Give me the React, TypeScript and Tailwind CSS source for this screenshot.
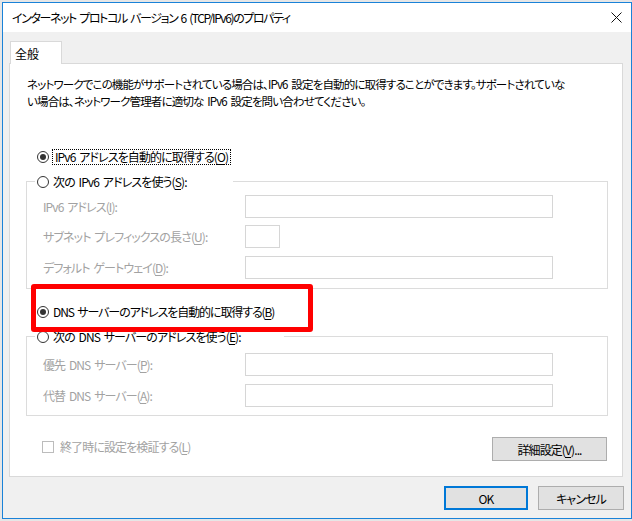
import React from 'react';

function Radio({ checked }: { checked?: boolean }) {
    return (
        <span className="flex h-[12px] w-[12px] shrink-0 items-center justify-center rounded-full border border-[#333333] bg-white">
            {checked && <span className="h-[6px] w-[6px] rounded-full bg-[#333333]" />}
        </span>
    );
}

function Key({ k }: { k: string }) {
    return <span className="underline decoration-1 underline-offset-[2px]">{k}</span>;
}

function Field({ label, k, narrow, last }: { label: string; k: string; narrow?: boolean; last?: boolean }) {
    return (
        <div className={last ? 'mt-[8px] flex h-[23px] items-center' : 'flex h-[23px] items-center'}>
            <span className="w-[210px] shrink-0 whitespace-nowrap pl-[8px] text-[#a2a2a2]">
                {label}(<Key k={k} />):
            </span>
            <span className={narrow ? 'h-[23px] w-[35px] border border-[#d6d6d6] bg-white' : 'h-[23px] w-[308px] border border-[#d6d6d6] bg-white'} />
        </div>
    );
}

export default function App() {
    return (
        <div className="h-[521px] w-[632px] bg-[#e6e6e6] pl-[2px] pt-[2px] font-['Noto_Sans_CJK_JP',sans-serif] text-[12px] leading-[17px] tracking-[-0.9px] text-black [font-feature-settings:'palt'] [word-spacing:2px]">
            <div className="flex h-[517px] w-[630px] flex-col border border-[#1a82d8] bg-[#f0f0f0]">
                {/* Title bar */}
                <div className="flex h-[29px] shrink-0 items-center justify-between bg-white px-[9px]">
                    <span className="whitespace-nowrap tracking-[-1.4px]">インターネット プロトコル バージョン 6 (TCP/IPv6)のプロパティ</span>
                    <svg width="11" height="11" viewBox="0 0 11 11">
                        <path d="M0.5 0.5 L10.5 10.5 M10.5 0.5 L0.5 10.5" stroke="#111" strokeWidth="1" />
                    </svg>
                </div>

                {/* Body */}
                <div className="flex flex-1 flex-col pl-[6px]">
                    <div className="relative z-10 -mb-px ml-px mt-[9px] flex h-[23px] w-[52px] items-center border border-b-0 border-[#d9d9d9] bg-white pl-[4px] tracking-normal">
                        全般
                    </div>

                    <div className="relative flex h-[414px] w-[614px] flex-col border border-[#d9d9d9] bg-white">
                        <p className="pl-[17px] pt-[12px] text-[11.5px] tracking-[-0.85px]">
                            <span className="block whitespace-nowrap">
                                ネットワークでこの機能がサポートされている場合は、IPv6 設定を自動的に取得することができます。サポートされていな
                            </span>
                            <span className="block whitespace-nowrap">い場合は、ネットワーク管理者に適切な IPv6 設定を問い合わせてください。</span>
                        </p>

                        {/* IPv6 auto */}
                        <div className="mt-[38px] flex h-[17px] items-center pl-[27px]">
                            <Radio checked />
                            <span className="ml-[3px] whitespace-nowrap border border-dotted border-black px-[2px] leading-[14px]">
                                IPv6 アドレスを自動的に取得する(<Key k="O" />)
                            </span>
                        </div>

                        <fieldset className="ml-[16px] mt-[8px] w-[582px] border border-[#dcdcdc] px-[8px] pb-[9px]">
                            <legend className="w-[198px] px-[2px]">
                                <span className="flex h-[17px] items-center gap-[4px] whitespace-nowrap">
                                    <Radio />
                                    <span>
                                        次の IPv6 アドレスを使う(<Key k="S" />):
                                    </span>
                                </span>
                            </legend>
                            <div className="mt-[5px] flex flex-col gap-[7px]">
                                <Field label="IPv6 アドレス" k="I" />
                                <Field label="サブネット プレフィックスの長さ" k="U" narrow />
                            </div>
                            <Field label="デフォルト ゲートウェイ" k="D" last />
                        </fieldset>

                        {/* DNS auto */}
                        <div className="mt-[14px] flex h-[17px] items-center gap-[4px] whitespace-nowrap pl-[27px] tracking-[-1.1px]">
                            <Radio checked />
                            <span>
                                DNS サーバーのアドレスを自動的に取得する(<Key k="B" />)
                            </span>
                        </div>

                        <fieldset className="ml-[16px] mt-[8px] w-[582px] border border-[#dcdcdc] px-[8px] pb-[8px]">
                            <legend className="w-[249px] px-[2px]">
                                <span className="flex h-[17px] items-center gap-[4px] whitespace-nowrap">
                                    <Radio />
                                    <span>
                                        次の DNS サーバーのアドレスを使う(<Key k="E" />):
                                    </span>
                                </span>
                            </legend>
                            <div className="mt-[8px] flex flex-col gap-[8px]">
                                <Field label="優先 DNS サーバー" k="P" />
                                <Field label="代替 DNS サーバー" k="A" />
                            </div>
                        </fieldset>

                        {/* Validate + advanced */}
                        <div className="mt-[21px] flex h-[24px] items-start justify-between pl-[32px] pr-[15px]">
                            <div className="mt-[1px] flex h-[17px] items-center gap-[6px] whitespace-nowrap text-[#a2a2a2]">
                                <span className="h-[12px] w-[12px] border border-[#bcbcbc] bg-white" />
                                <span>
                                    終了時に設定を検証する(<Key k="L" />)
                                </span>
                            </div>
                            <button className="flex h-[24px] w-[115px] items-center justify-center border border-[#adadad] bg-[#e1e1e1]">
                                詳細設定(<Key k="V" />)...
                            </button>
                        </div>

                        {/* annotation */}
                        <div className="absolute left-[21px] top-[220px] h-[48px] w-[282px] rounded-[3px] border-[5px] border-[#ff0000]" />
                    </div>

                    <div className="mt-[9px] flex justify-end gap-[10px] pr-[7px]">
                        <button className="flex h-[24px] w-[84px] items-center justify-center border-2 border-[#0078d7] bg-[#e1e1e1]">OK</button>
                        <button className="flex h-[24px] w-[86px] items-center justify-center border border-[#adadad] bg-[#e1e1e1]">キャンセル</button>
                    </div>
                </div>
            </div>
        </div>
    );
}
